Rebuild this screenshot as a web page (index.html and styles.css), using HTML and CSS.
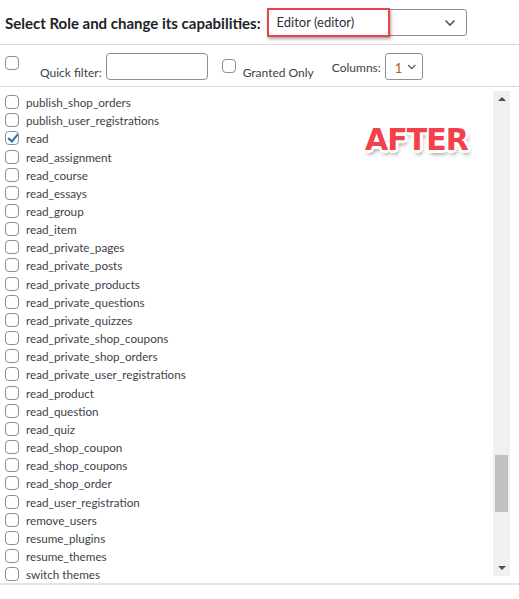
FILE: index.html
```html
<!DOCTYPE html>
<html lang="en">
<head>
  <meta charset="UTF-8" />
  <title>Role capabilities</title>
  <link rel="stylesheet" href="styles.css">
</head>
<body>
  <div class="role-bar">
    <label class="role-label" for="role">Select Role and change its capabilities:</label>
    <div class="role-select">
      <span class="role-value">Editor (editor)</span>
      <svg class="chev" width="12" height="8" viewBox="0 0 12 8"><path d="M1.5 1.5 6 6l4.5-4.5" fill="none" stroke="#50575e" stroke-width="1.6"/></svg>
    </div>
  </div>

  <div class="toolbar">
    <input type="checkbox" class="cb cb-all" />
    <span class="tb-label">Quick filter:</span>
    <input type="text" class="filter" />
    <input type="checkbox" class="cb" />
    <span class="tb-label granted">Granted Only</span>
    <span class="tb-label cols">Columns:</span>
    <div class="cols-select">
      <span class="cols-num">1</span>
      <svg width="12" height="8" viewBox="0 0 12 8"><path d="M1.5 1.5 6 6l4.5-4.5" fill="none" stroke="#50575e" stroke-width="1.6"/></svg>
    </div>
  </div>

  <div class="caps-box">
    <ul class="caps" id="caps"></ul>
    <div class="scrollbar">
      <span class="arrow up"></span>
      <div class="track"><div class="thumb"></div></div>
      <span class="arrow down"></span>
    </div>
    <div class="stamp">AFTER</div>
  </div>

  <script>
    const caps = [
      'publish_shop_orders', 'publish_user_registrations', 'read', 'read_assignment',
      'read_course', 'read_essays', 'read_group', 'read_item', 'read_private_pages',
      'read_private_posts', 'read_private_products', 'read_private_questions',
      'read_private_quizzes', 'read_private_shop_coupons', 'read_private_shop_orders',
      'read_private_user_registrations', 'read_product', 'read_question', 'read_quiz',
      'read_shop_coupon', 'read_shop_coupons', 'read_shop_order', 'read_user_registration',
      'remove_users', 'resume_plugins', 'resume_themes', 'switch themes'
    ];
    const granted = ['read'];
    const list = document.getElementById('caps');

    caps.forEach(name => {
      const li = document.createElement('li');
      const box = document.createElement('input');
      box.type = 'checkbox';
      box.className = 'cb';
      box.checked = granted.includes(name);
      const txt = document.createElement('span');
      txt.textContent = name;
      li.appendChild(box);
      li.appendChild(txt);
      list.appendChild(li);
    });
  </script>
</body>
</html>
```

FILE: styles.css
```css
body {
  font-family: Lato, 'Noto Sans', sans-serif;
  background: #fff;
  color: #3c434a;
  margin: 0;
  font-size: 12px;
}
.role-bar {
  display: flex;
  align-items: center;
  height: 45px;
  padding: 1px 0 0 5px;
  box-sizing: border-box;
  border-bottom: 1px solid #dcdcde;
}
.role-label {
  font-weight: bold;
  font-size: 15px;
  color: #1d2327;
}
.role-select {
  margin-left: 6px;
  width: 200px;
  height: 27px;
  box-sizing: border-box;
  border: 1px solid #8c8f94;
  border-radius: 3px;
  display: flex;
  align-items: center;
  justify-content: space-between;
  padding-right: 10px;
  position: relative;
}
.role-value {
  font-size: 13px;
  color: #2c3338;
  padding-left: 8px;
  height: 25px;
  line-height: 25px;
  width: 111px;
  border: 2px solid #ef4146;
  margin: -1px 0 0 -1px;
  box-shadow: 1px 2px 3px rgba(0, 0, 0, 0.35);
}
.toolbar {
  display: flex;
  align-items: center;
  height: 42px;
  padding-left: 5px;
  box-sizing: border-box;
  border-bottom: 1px solid #dcdcde;
}
.cb {
  appearance: none;
  width: 14px;
  height: 14px;
  margin: 0;
  border: 1px solid #8c8f94;
  border-radius: 4px;
  background: #fff;
  flex: none;
  box-sizing: border-box;
  position: relative;
}
.cb:checked::after {
  content: '';
  position: absolute;
  left: 4px;
  top: 0px;
  width: 4px;
  height: 8px;
  border: solid #2271b1;
  border-width: 0 2px 2px 0;
  transform: rotate(40deg);
}
.cb-all {
  align-self: flex-start;
  margin-top: 11px;
}
.tb-label {
  margin-left: 21px;
  margin-top: 13px;
  color: #3c434a;
}
.filter {
  margin-left: 4px;
  width: 102px;
  height: 27px;
  box-sizing: border-box;
  border: 1px solid #8c8f94;
  border-radius: 4px;
  margin-right: 14px;
  margin-top: 2px;
}
.granted {
  margin-left: 7px;
  margin-top: 14px;
}
.cols {
  margin-left: 18px;
  margin-top: 4px;
}
.cols-select {
  margin-left: 4px;
  width: 38px;
  height: 27px;
  box-sizing: border-box;
  border: 1px solid #8c8f94;
  border-radius: 3px;
  display: flex;
  align-items: center;
  padding: 0 5px 0 9px;
  gap: 5px;
  margin-top: 2px;
}
.cols-num {
  font-size: 13px;
  color: #a8601e;
  padding-top: 3px;
}
.caps-box {
  position: relative;
  display: flex;
  height: 496px;
  border-bottom: 2px solid #e3e3e3;
}
.caps {
  list-style: none;
  margin: 0;
  padding: 6px 0 0 5px;
  flex: 1;
  font-size: 11.7px;
}
.caps li {
  display: flex;
  align-items: center;
  height: 18.17px;
  gap: 7px;
  white-space: nowrap;
}
.scrollbar {
  width: 17px;
  margin: 4px 9px 7px 0;
  background: #f0f0f0;
  display: flex;
  flex-direction: column;
  align-items: center;
}
.arrow {
  width: 0;
  height: 0;
  border-left: 4px solid transparent;
  border-right: 4px solid transparent;
  margin: 6px 0;
}
.arrow.up {
  border-bottom: 4px solid #505050;
}
.arrow.down {
  border-top: 4px solid #505050;
}
.track {
  flex: 1;
  width: 100%;
  display: flex;
  justify-content: center;
}
.thumb {
  width: 13px;
  height: 57px;
  margin-top: 348px;
  background: #c1c1c1;
}
.stamp {
  position: absolute;
  left: 365px;
  top: 35px;
  font-family: 'DejaVu Sans', sans-serif;
  font-weight: bold;
  font-size: 30px;
  color: #f4404a;
  letter-spacing: -1px;
  text-shadow:
    -2px -2px 0 #fff, 2px -2px 0 #fff, -2px 2px 0 #fff, 2px 2px 0 #fff,
    0 -3px 0 #fff, 0 3px 0 #fff, -3px 0 0 #fff, 3px 0 0 #fff,
    2px 4px 4px rgba(0, 0, 0, 0.45);
}
```
